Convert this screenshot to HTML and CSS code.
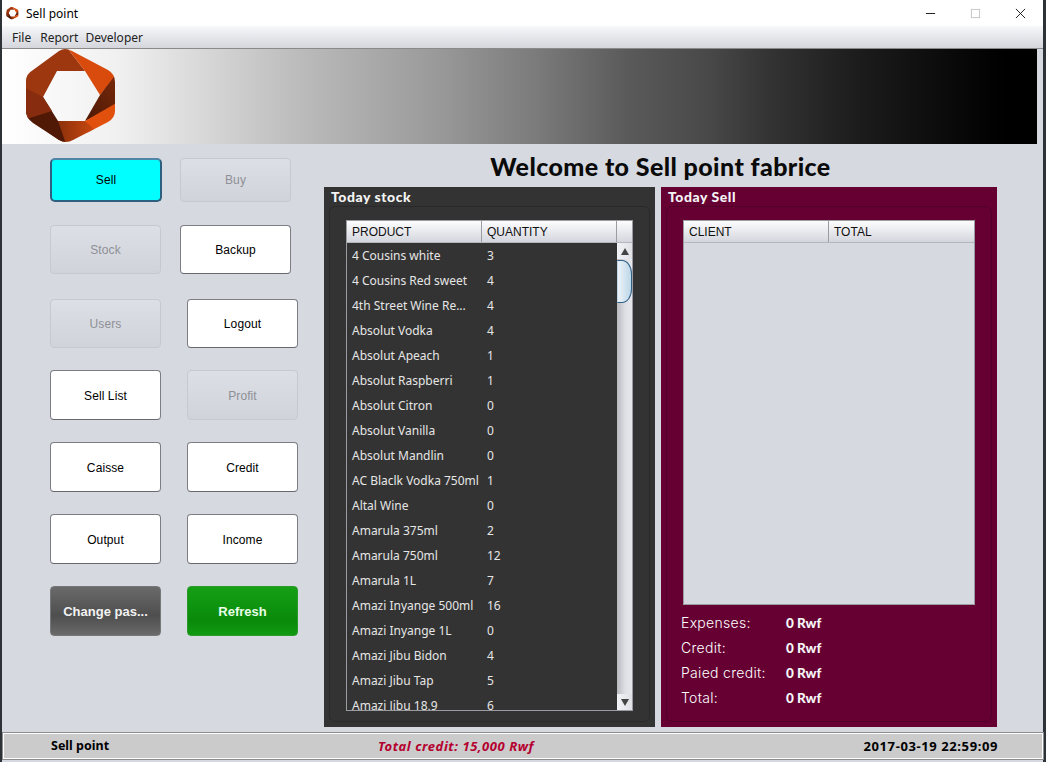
FILE: index.html
```html
<!DOCTYPE html>
<html>
<head>
    <meta charset="UTF-8">
    <title>Sell point</title>
    <link rel="stylesheet" href="styles.css">
</head>
<body>
<svg class="defs" width="0" height="0">
    <defs>
        <linearGradient id="bottomBand" x1="0" x2="1" y1="0" y2="0">
            <stop offset="0" stop-color="#742709"/>
            <stop offset="1" stop-color="#c8480f"/>
        </linearGradient>
        <linearGradient id="rightBand" x1="0" x2="1" y1="1" y2="0">
            <stop offset="0" stop-color="#4a1805"/>
            <stop offset="1" stop-color="#7e2b0a"/>
        </linearGradient>
        <clipPath id="hexClip">
            <path d="M49 6 Q55 2 62 6 L98 25 Q105 29 105 37 L105 66 Q105 73 98 77 L63 95 Q56 99 49 95 L23 78 Q16 73 16 66 L16 36 Q16 29 23 25 Z"/>
        </clipPath>
        <symbol id="logo" viewBox="0 0 120 105">
            <g clip-path="url(#hexClip)">
                <polygon points="55,0 75,26 47,26 33,52 10,60 10,24" fill="#9c3710"/>
                <polygon points="55,0 110,26 90,50 75,26" fill="#d94b0d"/>
                <polygon points="110,24 110,60 75,76 90,50" fill="url(#rightBand)"/>
                <polygon points="110,56 110,76 78,90 75,76" fill="#e2500e"/>
                <polygon points="75,76 84,84 57,102 34,84 48,76" fill="url(#bottomBand)"/>
                <polygon points="48,76 57,102 10,74 10,56 33,52" fill="#501906"/>
                <polygon points="33,52 42,66 10,76 10,40" fill="#872c0e"/>
            </g>
        </symbol>
    </defs>
</svg>
<div class="window">
    <div class="titlebar">
        <svg class="title-icon" viewBox="14 0 94 100"><use href="#logo" width="120" height="105"/></svg>
        <span class="title-text">Sell point</span>
        <div class="win-controls">
            <svg class="win-btn" viewBox="0 0 12 12"><path d="M1 6 H11" stroke="#111" stroke-width="1"/></svg>
            <svg class="win-btn" viewBox="0 0 12 12"><rect x="1.5" y="1.5" width="9" height="9" fill="none" stroke="#c4c4c4"/></svg>
            <svg class="win-btn" viewBox="0 0 12 12"><path d="M1 1 L11 11 M11 1 L1 11" stroke="#111" stroke-width="1"/></svg>
        </div>
    </div>
    <div class="menubar">
        <span>File</span>
        <span>Report</span>
        <span class="menu-last">Developer</span>
    </div>
    <div class="banner">
        <svg class="banner-logo" viewBox="0 0 120 105"><use href="#logo"/></svg>
    </div>
    <div class="main">
        <div class="side">
            <div class="btn-row first">
                <button class="btn btn-cyan">Sell</button>
                <button class="btn btn-off">Buy</button>
            </div>
            <div class="btn-row second">
                <button class="btn btn-off">Stock</button>
                <button class="btn">Backup</button>
            </div>
            <div class="btn-row third wide">
                <button class="btn btn-off">Users</button>
                <button class="btn">Logout</button>
            </div>
            <div class="btn-row tall wide">
                <button class="btn">Sell List</button>
                <button class="btn btn-off">Profit</button>
            </div>
            <div class="btn-row tall wide">
                <button class="btn">Caisse</button>
                <button class="btn">Credit</button>
            </div>
            <div class="btn-row tall wide">
                <button class="btn">Output</button>
                <button class="btn">Income</button>
            </div>
            <div class="btn-row tall wide">
                <button class="btn btn-gray">Change pas...</button>
                <button class="btn btn-green">Refresh</button>
            </div>
        </div>
        <div class="content">
            <h1 class="welcome">Welcome to Sell point fabrice</h1>
            <div class="panels">
                <div class="panel panel-stock">
                    <div class="panel-title">Today stock</div>
                    <div class="panel-inner">
                        <div class="grid grid-stock">
                            <div class="grid-head">
                                <div class="th th-product">PRODUCT</div>
                                <div class="th th-qty">QUANTITY</div>
                                <div class="th th-corner"></div>
                            </div>
                            <div class="grid-body">
                                <table class="rows" id="stockRows">
                                    <tr><td class="c1">4 Cousins white</td><td>3</td></tr>
                                    <tr><td class="c1">4 Cousins Red sweet</td><td>4</td></tr>
                                    <tr><td class="c1">4th Street Wine Re...</td><td>4</td></tr>
                                    <tr><td class="c1">Absolut Vodka</td><td>4</td></tr>
                                    <tr><td class="c1">Absolut Apeach</td><td>1</td></tr>
                                    <tr><td class="c1">Absolut Raspberri</td><td>1</td></tr>
                                    <tr><td class="c1">Absolut Citron</td><td>0</td></tr>
                                    <tr><td class="c1">Absolut Vanilla</td><td>0</td></tr>
                                    <tr><td class="c1">Absolut Mandlin</td><td>0</td></tr>
                                    <tr><td class="c1">AC Blaclk Vodka 750ml</td><td>1</td></tr>
                                    <tr><td class="c1">Altal Wine</td><td>0</td></tr>
                                    <tr><td class="c1">Amarula 375ml</td><td>2</td></tr>
                                    <tr><td class="c1">Amarula 750ml</td><td>12</td></tr>
                                    <tr><td class="c1">Amarula 1L</td><td>7</td></tr>
                                    <tr><td class="c1">Amazi Inyange 500ml</td><td>16</td></tr>
                                    <tr><td class="c1">Amazi Inyange 1L</td><td>0</td></tr>
                                    <tr><td class="c1">Amazi Jibu Bidon</td><td>4</td></tr>
                                    <tr><td class="c1">Amazi Jibu Tap</td><td>5</td></tr>
                                    <tr><td class="c1">Amazi Jibu 18,9</td><td>6</td></tr>
                                </table>
                                <div class="scrollbar">
                                    <div class="sb-btn"><span class="arrow-up"></span></div>
                                    <div class="sb-track">
                                        <div class="sb-thumb"></div>
                                    </div>
                                    <div class="sb-btn"><span class="arrow-down"></span></div>
                                </div>
                            </div>
                        </div>
                    </div>
                </div>
                <div class="panel panel-sell">
                    <div class="panel-title">Today Sell</div>
                    <div class="panel-inner">
                        <div class="grid grid-sell">
                            <div class="grid-head">
                                <div class="th th-client">CLIENT</div>
                                <div class="th th-total">TOTAL</div>
                            </div>
                            <div class="grid-empty"></div>
                        </div>
                        <div class="totals">
                            <div class="total-row"><span class="t-label">Expenses:</span><span class="t-value">0 Rwf</span></div>
                            <div class="total-row"><span class="t-label">Credit:</span><span class="t-value">0 Rwf</span></div>
                            <div class="total-row"><span class="t-label">Paied credit:</span><span class="t-value">0 Rwf</span></div>
                            <div class="total-row"><span class="t-label">Total:</span><span class="t-value">0 Rwf</span></div>
                        </div>
                    </div>
                </div>
            </div>
        </div>
    </div>
    <div class="statusbar">
        <span class="st-name">Sell point</span>
        <span class="st-credit">Total credit: 15,000 Rwf</span>
        <span class="st-time">2017-03-19 22:59:09</span>
    </div>
</div>
</body>
</html>
```

FILE: styles.css
```css
* {
    margin: 0;
    padding: 0;
    box-sizing: border-box;
}

html, body {
    width: 100%;
    height: 100%;
    overflow: hidden;
    background: #2c3236;
}

.defs {
    display: block;
    height: 0;
}

.window {
    display: flex;
    flex-direction: column;
    margin-left: 2px;
    width: 1041px;
    height: 762px;
    background: #d6d9e0;
    font-family: "Liberation Sans", Arial, sans-serif;
    font-size: 12px;
    color: #000;
}

/* title bar */
.titlebar {
    display: flex;
    align-items: center;
    flex: none;
    height: 26px;
    padding-left: 4px;
    background: #fff;
}

.title-icon {
    width: 13px;
    height: 14px;
}

.title-text {
    margin-left: 7px;
    font-family: "Noto Sans", sans-serif;
    font-size: 12px;
}

.win-controls {
    display: flex;
    margin-left: auto;
    padding-right: 17px;
    gap: 34px;
}

.win-btn {
    width: 11px;
    height: 11px;
}

.menubar {
    display: flex;
    align-items: center;
    flex: none;
    gap: 9px;
    height: 23px;
    padding-left: 10px;
    background: linear-gradient(#f7f8fa, #d4d6dc);
    border-bottom: 1px solid #8a8a8a;
    font-family: "Noto Sans", sans-serif;
    font-size: 12px;
    color: #222;
}

.menu-last {
    margin-left: -2px;
}

.banner {
    flex: none;
    width: 1035px;
    height: 95px;
    overflow: hidden;
    background: linear-gradient(90deg, #fff 0, #f0f0f0 118px, #bcbcbc 295px, #999 437px, #7c7c7c 531px, #5a5a5a 626px, #484848 708px, #333 768px, #1c1c1c 856px, #050505 974px, #000 1004px);
}

.banner-logo {
    display: block;
    width: 120px;
    height: 105px;
    margin: -4px 0 0 8px;
}

.main {
    display: flex;
    flex: 1;
    min-height: 0;
}

/* left buttons */
.side {
    flex: none;
    width: 322px;
    padding: 14px 0 0 48px;
}

.btn-row {
    display: flex;
    gap: 18px;
    height: 44px;
}

.btn-row.second {
    gap: 19px;
    height: 49px;
    margin-top: 23px;
}

.btn-row.third {
    height: 49px;
    margin-top: 25px;
}

.btn-row.tall {
    height: 50px;
    margin-top: 22px;
}

.btn-row.wide {
    gap: 26px;
}

.btn {
    width: 111px;
    height: 100%;
    border: 1px solid #7c7e84;
    border-bottom-color: #66686e;
    border-radius: 4px;
    background: #fff;
    font-family: "Liberation Sans", Arial, sans-serif;
    font-size: 12px;
    letter-spacing: 0.1px;
    color: #000;
}

.tall .btn {
    padding-top: 2px;
}

.btn-cyan {
    width: 112px;
    border: 2px solid #2c5f80;
    border-top-color: #4f86a8;
    border-radius: 5px;
    background: #0ff;
}

.btn-off {
    border: 1px solid #c6c9d1;
    background: linear-gradient(#dcdfe6, #d0d3da);
    color: #8e9095;
}

.tall .btn-gray {
    padding-top: 0;
    border: 1px solid #777;
    background: linear-gradient(#6a6a6a, #4e4e4e 60%, #6a6a6a);
    font-weight: bold;
    font-size: 13px;
    letter-spacing: 0;
    color: #f2f2f2;
}

.tall .btn-green {
    padding-top: 0;
    border: 1px solid #2a9a2a;
    background: linear-gradient(#15a015, #0a8a0a 70%, #109a10);
    font-weight: bold;
    font-size: 13px;
    letter-spacing: 0;
    color: #e8ffe8;
}

/* panels */
.content {
    flex: none;
    width: 673px;
}

.welcome {
    height: 43px;
    padding-top: 7px;
    font-family: "Lato", sans-serif;
    font-size: 25px;
    font-weight: 900;
    line-height: 30px;
    letter-spacing: 0.4px;
    text-align: center;
    color: #0a0a0a;
}

.panels {
    display: flex;
    gap: 6px;
}

.panel {
    height: 540px;
    padding: 0 5px 5px 5px;
}

.panel-stock {
    width: 331px;
    background: #333;
}

.panel-sell {
    width: 336px;
    background: #660033;
}

.panel-title {
    height: 19px;
    padding: 1px 0 0 2px;
    font-family: "Lato", sans-serif;
    font-size: 14px;
    font-weight: 900;
    letter-spacing: 0.55px;
    color: #f4f4f4;
}

.panel-inner {
    height: 516px;
    border: 1px solid rgba(0, 0, 0, 0.18);
    border-radius: 6px;
    padding: 13px 0 0 16px;
}

.grid {
    border: 1px solid #9a9ca2;
}

.grid-stock {
    width: 287px;
    height: 491px;
    overflow: hidden;
}

.grid-sell {
    width: 292px;
    height: 385px;
}

.grid-head {
    display: flex;
    height: 22px;
    background: linear-gradient(#fdfdfe, #d4d6de);
    border-bottom: 1px solid #b4b6bc;
}

.th {
    padding: 4px 0 0 5px;
    font-size: 12px;
    color: #111;
    border-right: 1px solid #9a9ca2;
}

.th-product {
    width: 135px;
}

.th-qty {
    width: 135px;
}

.th-corner {
    flex: 1;
    border-right: 0;
}

.th-client {
    width: 145px;
}

.th-total {
    flex: 1;
    border-right: 0;
}

.grid-empty {
    height: 361px;
    background: #d6d9e0;
}

.grid-body {
    display: flex;
    height: 467px;
    overflow: hidden;
    background: #333;
}

.rows {
    flex: none;
    align-self: flex-start;
    width: 270px;
    border-collapse: collapse;
    table-layout: fixed;
    font-family: "Noto Sans", sans-serif;
    font-size: 12px;
    color: #e6e6e6;
}

.rows td {
    height: 25px;
    padding: 0 0 0 5px;
    white-space: nowrap;
    overflow: hidden;
}

.rows .c1 {
    width: 135px;
}

.scrollbar {
    display: flex;
    flex-direction: column;
    flex: none;
    width: 15px;
    background: #d6d9e0;
}

.sb-btn {
    display: flex;
    align-items: center;
    justify-content: center;
    flex: none;
    height: 16px;
    background: linear-gradient(90deg, #f2f3f6, #dfe1e7);
}

.arrow-up {
    border: 4px solid transparent;
    border-top: 0;
    border-bottom: 7px solid #444;
}

.arrow-down {
    border: 4px solid transparent;
    border-bottom: 0;
    border-top: 7px solid #444;
}

.sb-track {
    position: relative;
    flex: 1;
    background: linear-gradient(90deg, #b8bac0, #dfe0e5 55%, #e6e7ec);
}

.sb-thumb {
    position: absolute;
    top: 1px;
    left: 0;
    width: 15px;
    height: 43px;
    border: 1px solid #2f5f85;
    border-left-color: transparent;
    border-radius: 0 10px 10px 0 / 0 14px 14px 0;
    background: linear-gradient(90deg, #edf3f8, #bcd6e8);
}

/* totals under the sell table */
.totals {
    margin-left: -2px;
    padding-top: 5px;
}

.total-row {
    display: flex;
    align-items: center;
    height: 25px;
    color: #fff;
}

.t-label {
    width: 105px;
    font-family: "Inter", sans-serif;
    font-size: 14px;
    font-weight: 300;
    letter-spacing: 0.3px;
}

.t-value {
    font-family: "Lato", sans-serif;
    font-size: 13.5px;
    font-weight: 900;
    color: #f6f6f6;
}

/* status bar */
.statusbar {
    display: flex;
    align-items: center;
    flex: none;
    height: 26px;
    margin: 0 0 3px 1px;
    padding: 0 44px 1px 47px;
    background: #cbcbcb;
    border: 1px solid #fff;
    outline: 1px solid #8c8c8c;
    font-family: "Noto Sans", sans-serif;
    font-size: 13px;
    font-weight: bold;
}

.st-name {
    width: 327px;
    font-size: 12.5px;
}

.st-credit {
    font-style: italic;
    letter-spacing: 0.55px;
    color: #b5002f;
}

.st-time {
    margin-left: auto;
    letter-spacing: 0.6px;
}
```
